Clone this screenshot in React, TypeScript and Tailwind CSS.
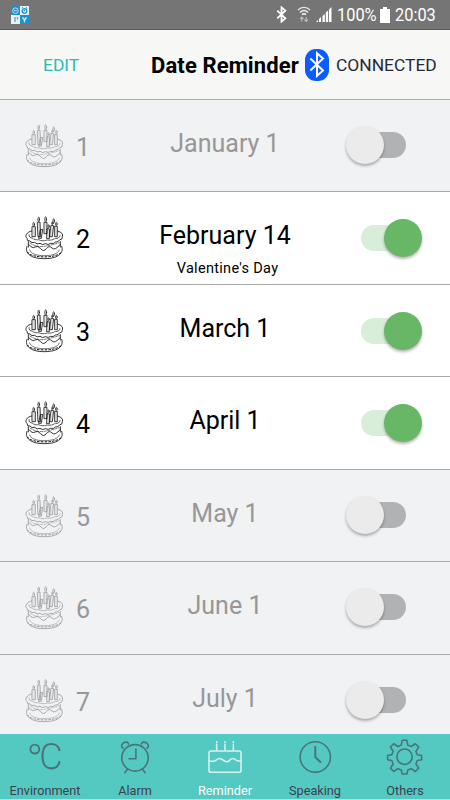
import { useState } from "react";

type Reminder = {
  id: number;
  date: string;
  note?: string;
  enabled: boolean;
};

const initialReminders: Reminder[] = [
  { id: 1, date: "January 1", enabled: false },
  { id: 2, date: "February 14", note: "Valentine's Day", enabled: true },
  { id: 3, date: "March 1", enabled: true },
  { id: 4, date: "April 1", enabled: true },
  { id: 5, date: "May 1", enabled: false },
  { id: 6, date: "June 1", enabled: false },
  { id: 7, date: "July 1", enabled: false },
];

function BluetoothMark({ className, width }: { className: string; width: number }) {
  return (
    <svg className={className} viewBox="0 0 12 20" fill="none" stroke="currentColor" strokeWidth={width}>
      <path d="M1 5.5L10.5 14.5L6 18.5V1.5L10.5 5.5L1 14.5" />
    </svg>
  );
}

function StatusBar() {
  return (
    <div className="flex h-[30px] shrink-0 items-center border-b border-[#5c5c5c] bg-[#757575] text-white">
      <svg className="ml-[11px] h-[18px] w-[18px]" viewBox="0 0 18 18" fill="none">
        <path fill="#1d93c9" d="M0 0h9v9H0zM9 9h9v9H9z" />
        <path fill="#e9f1f6" d="M9 0h9v9H9zM0 9h9v9H0z" />
        <circle cx="4.5" cy="4.7" r="2.8" stroke="#b9e0f2" />
        <path d="M3 4.7h3" stroke="#b9e0f2" />
        <circle cx="13.5" cy="5" r="2.3" stroke="#1d93c9" strokeWidth="1.3" />
        <path d="M10.8 2.2l1.3-.8M16.2 2.2l-1.3-.8M13.5 3.8V5h-1" stroke="#1d93c9" />
        <path d="M4 11v5M6.5 11v2.5" stroke="#63a9cd" strokeWidth="1.4" />
        <path d="M11.5 11.3l2 2.7 2-2.7M13.5 13.5v2.8" stroke="#d5edf8" strokeWidth="1.4" />
      </svg>
      <BluetoothMark className="ml-[247px] h-[17px] w-[11px]" width={2.1} />
      <svg className="ml-[10px] h-[17px] w-[14px]" viewBox="0 0 14 17" fill="none" stroke="currentColor" strokeWidth="1.4">
        <path d="M1 4C4.5.5 9.5.5 13 4M3 6.5C5.5 4 8.5 4 11 6.5" opacity=".85" />
        <path d="M5 8.7Q7 7 9 8.7" />
        <path d="M4.8 15.5v-4.5M3 13l1.8-2 1.8 2M9.2 11v4.5M7.4 13.5l1.8 2 1.8-2" strokeWidth="1.1" opacity=".55" />
      </svg>
      <svg className="ml-[5px] h-4 w-4" viewBox="0 0 16 16" fill="currentColor">
        <path d="M0 15l2-2v2zM3 12l2-2v5H3zM6.5 9l2.3-2v8H6.500zM9.800 5.500l2.300-2V15H9.800zM13 2.500L15.500 0v15H13z" />
      </svg>
      <span className="mt-px ml-[5px] w-[39px] origin-left scale-x-[.91] text-[18px] leading-none">100%</span>
      <svg className="ml-[4px] h-4 w-[10px]" viewBox="0 0 10 16" fill="currentColor">
        <path d="M3 0h4v2h3v14H0V2h3z" />
      </svg>
      <span className="mt-px ml-[5px] origin-left scale-x-[.91] text-[18px] leading-none">20:03</span>
    </div>
  );
}

function Header() {
  return (
    <header className="flex h-[70px] shrink-0 items-center border-b border-[#acacac] bg-[#f7f7f5]">
      <button className="mt-[2px] ml-[43px] w-[108px] text-left text-[17.4px] leading-none text-[#27bdb2]">EDIT</button>
      <h1 className="mt-[2px] w-[154px] text-[22px] leading-none font-bold tracking-[0.12px] whitespace-nowrap text-black">
        Date Reminder
      </h1>
      <span className="flex h-8 w-6 items-center justify-center rounded-[11px] bg-[#0a5cff] text-white">
        <BluetoothMark className="h-[27px] w-4" width={1.5} />
      </span>
      <span className="mt-[2px] ml-[7px] text-[17.4px] leading-none text-[#26283a]">CONNECTED</span>
    </header>
  );
}

function BirthdayCake() {
  return (
    <svg
      className="h-[45px] w-10 shrink-0"
      viewBox="45 35 120 135"
      fill="none"
      stroke="currentColor"
      strokeWidth="2.4"
      strokeLinecap="round"
      strokeLinejoin="round"
    >
      <path d="M51 126C44 143 57 163 103 163S162 143 155 126" />
      <path d="M59 137C63 149 80 154 103 154S144 149 148 137" strokeWidth="1.6" />
      <path d="M53 144C65 162 140 163 155 143" strokeDasharray="5 6" strokeWidth="3" />
      <path d="M55 112v16M151 112v16" />
      <path d="M57 121Q67 134 75 128T92 133T109 133T126 131T150 121" />
      <path d="M60 116Q80 130 103 126T148 115" strokeDasharray="7 4" strokeWidth="1.6" />
      <path d="M65 80C50 83 43 95 51 102Q50 111 60 110Q65 118 74 114Q81 122 90 117Q98 124 106 118Q115 123 122 117Q131 120 136 113Q146 114 148 107Q159 105 157 97Q162 86 143 80" />
      <path d="M57 91Q55 99 66 101Q75 108 86 106Q98 112 111 107Q126 109 134 103Q148 103 150 94" strokeDasharray="8 3" strokeWidth="2" />
      <g fill="currentColor" fillOpacity=".12" strokeWidth="2.2">
        <path d="M67 67h9v30h-9zM83 54l7-1 2 44h-7zM103 54h8v34h-8zM124 63l7 1-4 33h-7zM135 66h7v31h-7zM112 73l7 1-1 29h-7zM92 76l6-1-4 27h-7z" />
      </g>
      <g fill="currentColor" fillOpacity=".2" strokeWidth="1.7">
        <ellipse cx="71" cy="60" rx="2.6" ry="6" />
        <ellipse cx="86" cy="45" rx="2.6" ry="7" />
        <ellipse cx="107" cy="45" rx="2.8" ry="8" />
        <ellipse cx="131" cy="50" rx="2.6" ry="7" />
        <ellipse cx="127" cy="57" rx="2" ry="4" />
        <ellipse cx="139" cy="59" rx="2.6" ry="5" />
        <ellipse cx="116" cy="66" rx="2" ry="5" />
      </g>
    </svg>
  );
}

function Toggle({ on, onChange }: { on: boolean; onChange: () => void }) {
  return (
    <button
      role="switch"
      aria-checked={on}
      onClick={onChange}
      className={`mt-[6px] flex h-[26px] w-[45px] shrink-0 items-center rounded-full ${
        on ? "justify-end bg-[#d8eed9]" : "justify-start bg-[#b1b2b4]"
      }`}
    >
      <span
        className={`h-[38px] w-[38px] shrink-0 rounded-full shadow-[0_2px_3px_rgba(0,0,0,0.3)] ${
          on ? "-mr-[15.5px] bg-[#68b766]" : "-ml-[15px] bg-[#ebebeb]"
        }`}
      />
    </button>
  );
}

function ReminderRow({ reminder, onToggle }: { reminder: Reminder; onToggle: () => void }) {
  const { id, date, note, enabled } = reminder;
  return (
    <li
      className={`flex shrink-0 items-start border-b border-[#a9a9a9] pl-[25px] ${
        id % 2 === 0 ? "h-[93px]" : "h-[92px]"
      } ${enabled ? "bg-white text-black" : "bg-[#f1f2f4] text-[#979797]"}`}
    >
      <div className="mt-6 flex w-[105px] items-center">
        <BirthdayCake />
        <span className="mt-px ml-[11px] text-[25px] leading-none">{id}</span>
      </div>
      <div className="mt-[30px] flex w-[190px] flex-col items-center">
        <span className="text-[25px] leading-7">{date}</span>
        {note && <span className="mt-[11px] ml-[5px] text-[14.5px] leading-4 tracking-[0.3px]">{note}</span>}
      </div>
      <div className={enabled ? "mt-[26.5px] ml-[41px]" : "mt-[26px] ml-[41px]"}>
        <Toggle on={enabled} onChange={onToggle} />
      </div>
    </li>
  );
}

const tabs = [
  {
    label: "Environment",
    icon: (
      <>
        <circle cx="9" cy="12" r="4.8" strokeWidth="2" />
        <path d="M35.5 13C34 4.5 20 4 18 13.5Q16.5 19.5 18 25.5C20 35.5 34 35 35.5 26" strokeWidth="2.3" />
      </>
    ),
  },
  {
    label: "Alarm",
    icon: (
      <>
        <circle cx="20" cy="21.5" r="14.3" />
        <path d="M21 12V22.5H13.5M12 33.5l-3 4M28 33.5l3 4M7 11L5.5 9.5Q5.5 4 12 4.5l1 2M33 11l1.5-1.5Q34.5 4 28 4.5l-1 2" />
      </>
    ),
  },
  {
    label: "Reminder",
    icon: (
      <>
        <rect x="2.7" y="14" width="34.6" height="23" rx="2" />
        <path d="M3 24.5Q8 26.5 11 23.5T18 24T25 24T32 24Q34 25.5 37 24.5M11 7v6M20 7v6M29 7v6M11 4v1M20 4v1M29 4v1" />
      </>
    ),
  },
  {
    label: "Speaking",
    icon: (
      <>
        <circle cx="20.3" cy="20.5" r="16.4" />
        <path d="M20.3 9.5v11l5.5 5.5" strokeWidth="2.1" />
      </>
    ),
  },
  {
    label: "Others",
    icon: (
      <>
        <circle cx="19.5" cy="20.2" r="8.3" />
        <path d="M17 2.5h5l1 5.2 3.7 1.5 4.5-3 3.6 3.6-3 4.5 1.5 3.7 4.7 1v4.4l-4.7 1-1.5 3.7 3 4.5-3.6 3.6-4.5-3-3.7 1.5-1 4.2h-5l-1-4.2-3.7-1.5-4.5 3-3.6-3.6 3-4.5-1.5-3.7-4.5-1v-4.4l4.5-1 1.5-3.7-3-4.5 3.6-3.6 4.5 3L16 7.7z" />
      </>
    ),
  },
];

function TabBar() {
  return (
    <nav className="flex h-[66px] shrink-0 border-b border-[#b9deda] bg-[#54c9c1]">
      {tabs.map(({ label, icon }) => (
        <a
          key={label}
          className={`flex w-[90px] flex-col items-center ${label === "Reminder" ? "text-white" : "text-[#3c3f4d]"}`}
        >
          <svg
            className={`mt-[4px] h-10 w-10 ${label === "Reminder" ? "text-[#d4f3f0]" : "text-[#4b7375]"}`}
            viewBox="0 0 40 40"
            fill="none"
            stroke="currentColor"
            strokeWidth="1.7"
            strokeLinecap="round"
            strokeLinejoin="round"
          >
            {icon}
          </svg>
          <span className="mt-[8px] text-[12.7px] leading-4">{label}</span>
        </a>
      ))}
    </nav>
  );
}

export default function App() {
  const [reminders, setReminders] = useState(initialReminders);

  const toggleReminder = (id: number) => {
    setReminders(reminders.map((r) => (r.id === id ? { ...r, enabled: !r.enabled } : r)));
  };

  return (
    <div className="flex h-[800px] w-[450px] flex-col overflow-hidden bg-[#f1f2f4] font-[Roboto,sans-serif]">
      <StatusBar />
      <Header />
      <ul className="flex min-h-0 flex-1 flex-col overflow-hidden">
        {reminders.map((r) => (
          <ReminderRow key={r.id} reminder={r} onToggle={() => toggleReminder(r.id)} />
        ))}
      </ul>
      <TabBar />
    </div>
  );
}
